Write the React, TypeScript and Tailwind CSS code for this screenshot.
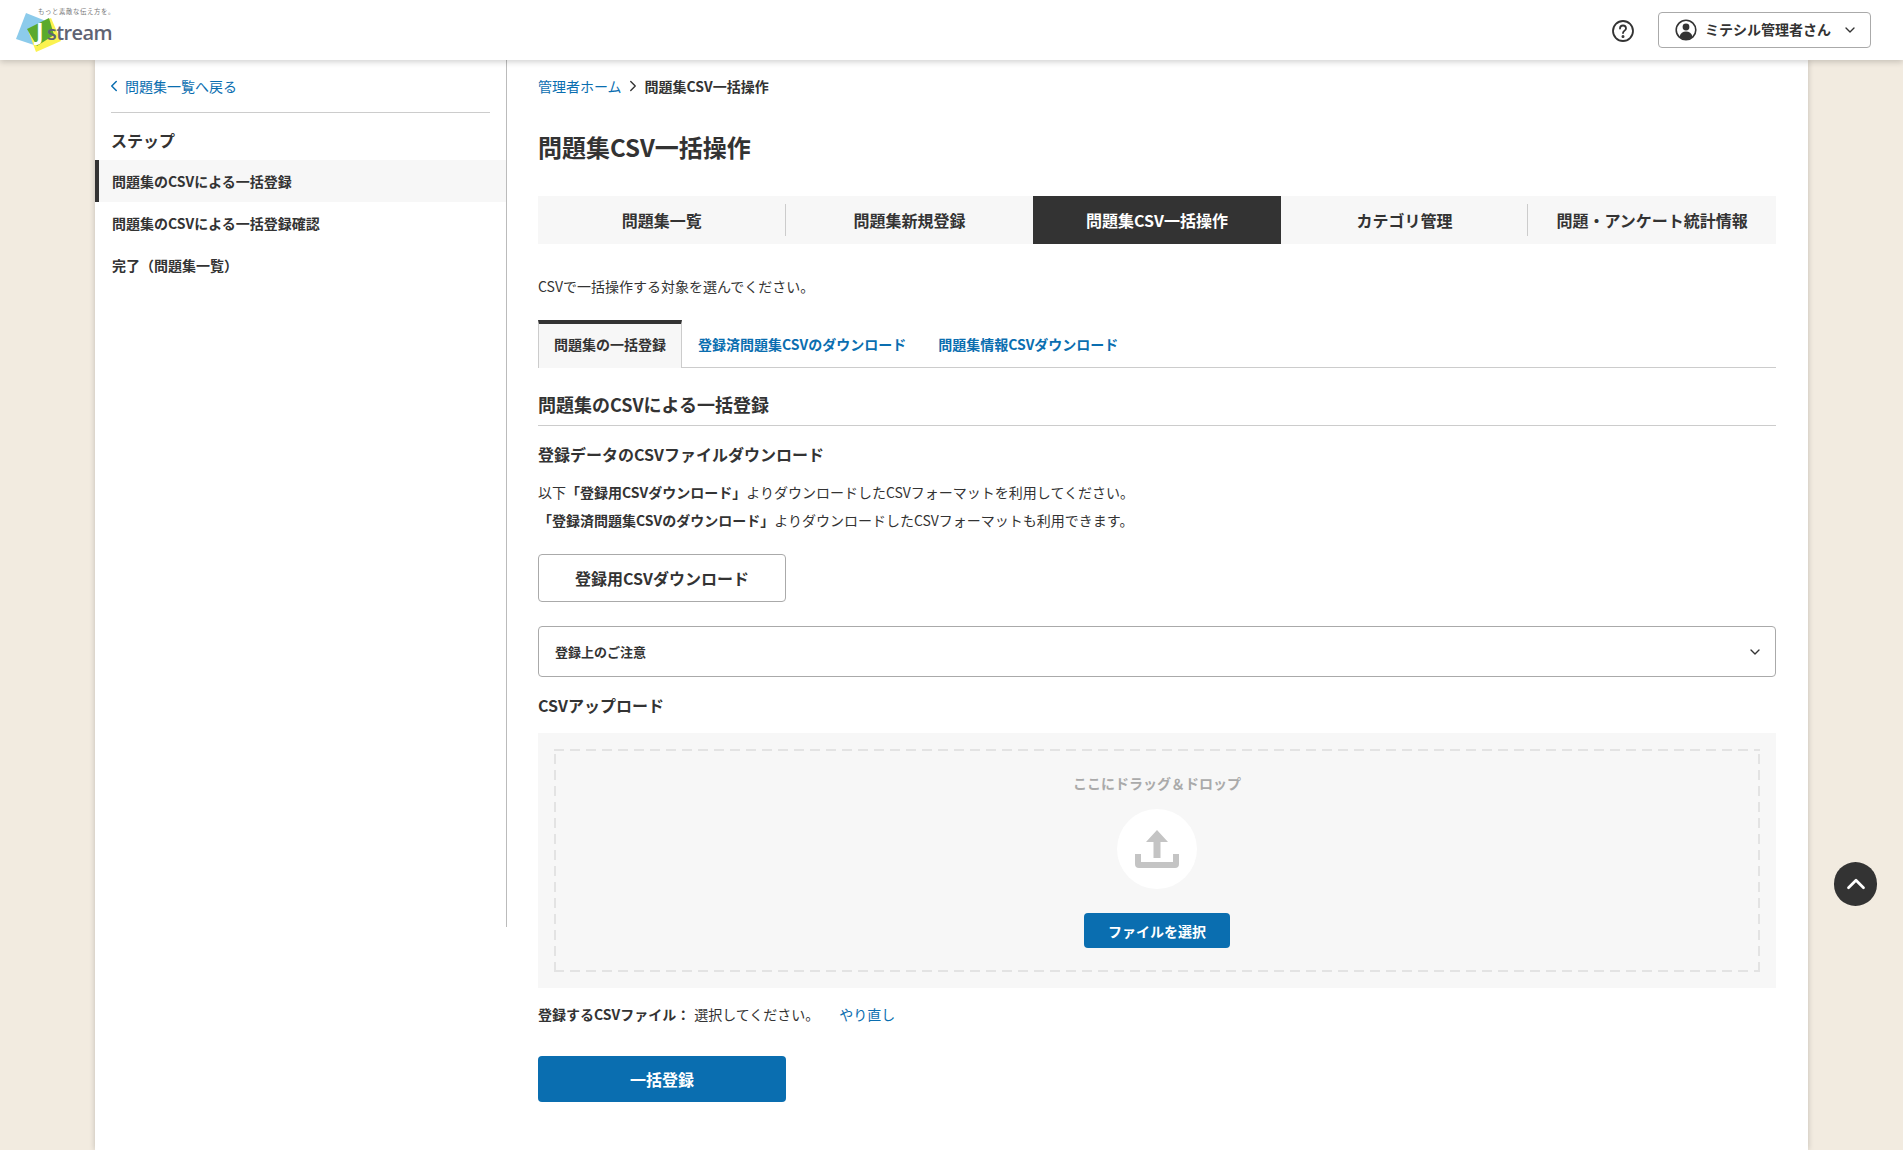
import React from 'react';
import { ChevronDown, ChevronLeft, ChevronRight, ChevronUp } from 'lucide-react';

const topTabs = ['問題集一覧', '問題集新規登録', '問題集CSV一括操作', 'カテゴリ管理', '問題・アンケート統計情報'];
const steps = ['問題集のCSVによる一括登録', '問題集のCSVによる一括登録確認', '完了（問題集一覧）'];

const Logo = () => (
  <div className="relative w-[120px] h-[60px] shrink-0">
    <svg width="120" height="60" viewBox="0 0 120 60" className="block">
      <polygon points="26,13 51,23 37,46 16,39" fill="#8ccbeb" />
      <polygon points="51,18 61,41 36,52 28,30" fill="#fbf24f" />
      <polygon points="27,29 49,18 54,35 37,46" fill="#5aaa2d" />
      <text x="36" y="40" fontFamily="'Open Sans', sans-serif" fontSize="23" fontWeight="700" fill="#fff">J</text>
      <text x="47" y="40" fontFamily="'Open Sans', sans-serif" fontSize="20" fontWeight="600" fill="#5f6373" textLength="65.500">stream</text>
      <text x="38" y="14" fontFamily="'Noto Sans CJK JP', sans-serif" fontSize="6.4" fill="#777" letterSpacing="0.6">もっと素敵な伝え方を。</text>
    </svg>
  </div>
);

const UserIcon = () => (
  <svg width="22" height="22" viewBox="0 0 22 22">
    <circle cx="11" cy="11" r="9.8" fill="#fff" stroke="#333" strokeWidth="1.6" />
    <circle cx="11" cy="8" r="3.4" fill="#333" />
    <path d="M4.6 17.600c.8-3.400 3.300-5 6.400-5s5.600 1.600 6.400 5c-1.600 2-3.900 3.200-6.400 3.200s-4.800-1.200-6.400-3.200z" fill="#333" />
  </svg>
);

const UploadIcon = () => (
  <svg width="44" height="38" viewBox="0 0 44 38">
    <path d="M22 0l11 12h-7.500v16h-7V12H11z" fill="#c4c4c4" />
    <path d="M0 24h6v8h32v-8h6v10a4 4 0 0 1-4 4H4a4 4 0 0 1-4-4z" fill="#c4c4c4" />
  </svg>
);

export default function App() {
  return (
    <div className="relative h-[1150px] overflow-hidden bg-[#f2ebe0] text-[#333] font-['Noto_Sans_CJK_JP',sans-serif]">
      <header className="relative z-10 h-[60px] bg-white shadow-[0_2px_6px_rgba(0,0,0,0.18)] flex items-center justify-between pr-[32px]">
        <Logo />
        <div className="flex items-center gap-[23px]">
          <svg className="mt-[2px]" width="24" height="24" viewBox="0 0 24 24" fill="none" stroke="#333" strokeWidth="1.8" strokeLinecap="round">
            <circle cx="12" cy="12" r="10" />
            <path d="M9 9.500a3 3 0 0 1 6 0c0 2-3 2.300-3 4.500" />
            <circle cx="12" cy="17.500" r="0.600" fill="#333" />
          </svg>
          <button type="button" className="w-[213px] h-[36px] border border-[#aaa] rounded-[4px] bg-white flex items-center pl-[16px] text-sm font-bold">
            <UserIcon />
            <span className="ml-[8px] pb-[2px] leading-none">ミテシル管理者さん</span>
            <ChevronDown className="w-[16px] h-[16px] ml-[11px]" strokeWidth={2} />
          </button>
        </div>
      </header>

      <div className="mx-auto w-[1713px] h-[1090px] bg-white shadow-[0_0_6px_rgba(0,0,0,0.2)] flex">
        <aside className="w-[412px] h-[867px] shrink-0 border-r border-[#bbb]">
          <div className="mx-4 pt-[15px] pb-[15px] border-b border-[#ccc] flex items-center text-sm text-[#0a6eb0] leading-[22px]">
            <ChevronLeft className="w-[18px] h-[18px] -ml-[6px] mr-[2px] -mt-[1px]" strokeWidth={2} />
            <span>問題集一覧へ戻る</span>
          </div>
          <h2 className="px-4 mt-[15px] mb-[8px] text-base font-bold leading-[24px]">ステップ</h2>
          <ul>
            {steps.map((step, i) => (
              <li
                key={step}
                className={
                  i === 0
                    ? 'h-[42px] flex items-center pl-[13px] border-l-4 border-[#333] bg-[#f7f7f7] text-sm font-bold'
                    : 'h-[42px] flex items-center pl-[17px] text-sm font-bold'
                }
              >
                {step}
              </li>
            ))}
          </ul>
        </aside>

        <main className="flex-1 pl-[31px] pr-[32px]">
          <nav className="pt-[15px] flex items-center text-sm leading-[22px]">
            <span className="text-[#0a6eb0]">管理者ホーム</span>
            <ChevronRight className="w-[18px] h-[18px] ml-[2px] mr-[3px]" strokeWidth={1.8} />
            <span className="font-bold">問題集CSV一括操作</span>
          </nav>
          <h1 className="mt-[32px] text-2xl font-bold leading-[36px]">問題集CSV一括操作</h1>

          <div className="mt-[31px] grid grid-cols-5 h-[48px] bg-[#f7f7f7]">
            {topTabs.map((tab, i) => (
              <div key={tab} className="relative flex items-center justify-center text-base font-bold">
                {i === 2 ? (
                  <div className="absolute inset-0 bg-[#333] text-white flex items-center justify-center">{tab}</div>
                ) : (
                  tab
                )}
                {(i === 0 || i === 3) && <span className="absolute right-0 top-[8px] bottom-[8px] w-px bg-[#ccc]" />}
              </div>
            ))}
          </div>

          <p className="mt-[31px] text-sm leading-[22px]">CSVで一括操作する対象を選んでください。</p>

          <div className="mt-[23px] flex h-[48px] border-b border-[#ccc] text-sm font-bold">
            <div className="h-[48px] w-[144px] pb-[4px] border-t-4 border-x border-t-[#333] border-x-[#ccc] bg-[#f7f7f7] flex items-center justify-center">
              問題集の一括登録
            </div>
            <div className="ml-[16px] flex items-center text-[#0a6eb0]">登録済問題集CSVのダウンロード</div>
            <div className="ml-[32px] flex items-center text-[#0a6eb0]">問題集情報CSVダウンロード</div>
          </div>

          <h2 className="mt-[23px] pb-[7px] border-b border-[#ccc] text-lg font-bold leading-[27px]">問題集のCSVによる一括登録</h2>
          <h3 className="mt-[16px] text-base font-bold leading-[24px]">登録データのCSVファイルダウンロード</h3>
          <div className="mt-[12px] text-sm leading-[28px]">
            <p>
              以下<strong className="font-bold">「登録用CSVダウンロード」</strong>よりダウンロードしたCSVフォーマットを利用してください。
            </p>
            <p>
              <strong className="font-bold">「登録済問題集CSVのダウンロード」</strong>よりダウンロードしたCSVフォーマットも利用できます。
            </p>
          </div>

          <button type="button" className="mt-[20px] block w-[248px] h-[48px] border border-[#aaa] rounded-[4px] text-base font-bold">
            登録用CSVダウンロード
          </button>

          <div className="mt-[24px] h-[51px] border border-[#aaa] rounded-[4px] flex items-center justify-between pl-[16px] pr-[12px]">
            <span className="text-[13px] font-bold">登録上のご注意</span>
            <ChevronDown className="w-[16px] h-[16px]" strokeWidth={2} />
          </div>

          <h3 className="mt-[16px] text-base font-bold leading-[24px]">CSVアップロード</h3>

          <div className="mt-[16px] h-[255px] bg-[#f7f7f7] p-4">
            <div className="h-[223px] pt-[23px] flex flex-col items-center bg-no-repeat [background-image:repeating-linear-gradient(90deg,#e3e3e3_0,#e3e3e3_10px,transparent_10px,transparent_16px),repeating-linear-gradient(90deg,#e3e3e3_0,#e3e3e3_10px,transparent_10px,transparent_16px),repeating-linear-gradient(0deg,#e3e3e3_0,#e3e3e3_10px,transparent_10px,transparent_16px),repeating-linear-gradient(0deg,#e3e3e3_0,#e3e3e3_10px,transparent_10px,transparent_16px)] [background-size:100%_2px,100%_2px,2px_100%,2px_100%] [background-position:0_0,0_100%,0_0,100%_0]">
              <p className="text-sm font-bold text-[#aaa] leading-[22px]">ここにドラッグ＆ドロップ</p>
              <div className="mt-[15px] w-[80px] h-[80px] rounded-full bg-white flex items-center justify-center">
                <UploadIcon />
              </div>
              <button type="button" className="mt-[24px] w-[146px] h-[35px] rounded-[4px] bg-[#0a6eb0] text-white text-sm font-bold">
                ファイルを選択
              </button>
            </div>
          </div>

          <div className="mt-[15px] flex text-sm leading-[22px]">
            <strong className="font-bold">登録するCSVファイル：</strong>
            <span className="ml-[4px]">選択してください。</span>
            <span className="ml-[20px] text-[#0a6eb0]">やり直し</span>
          </div>

          <button type="button" className="mt-[31px] block w-[248px] h-[46px] rounded-[4px] bg-[#0a6eb0] text-white text-base font-bold">
            一括登録
          </button>
        </main>
      </div>

      <button type="button" className="absolute left-[1834px] top-[862px] w-[43px] h-[44px] rounded-full bg-[#333] text-white flex items-center justify-center">
        <ChevronUp className="w-[30px] h-[30px]" strokeWidth={2.2} />
      </button>
    </div>
  );
}
